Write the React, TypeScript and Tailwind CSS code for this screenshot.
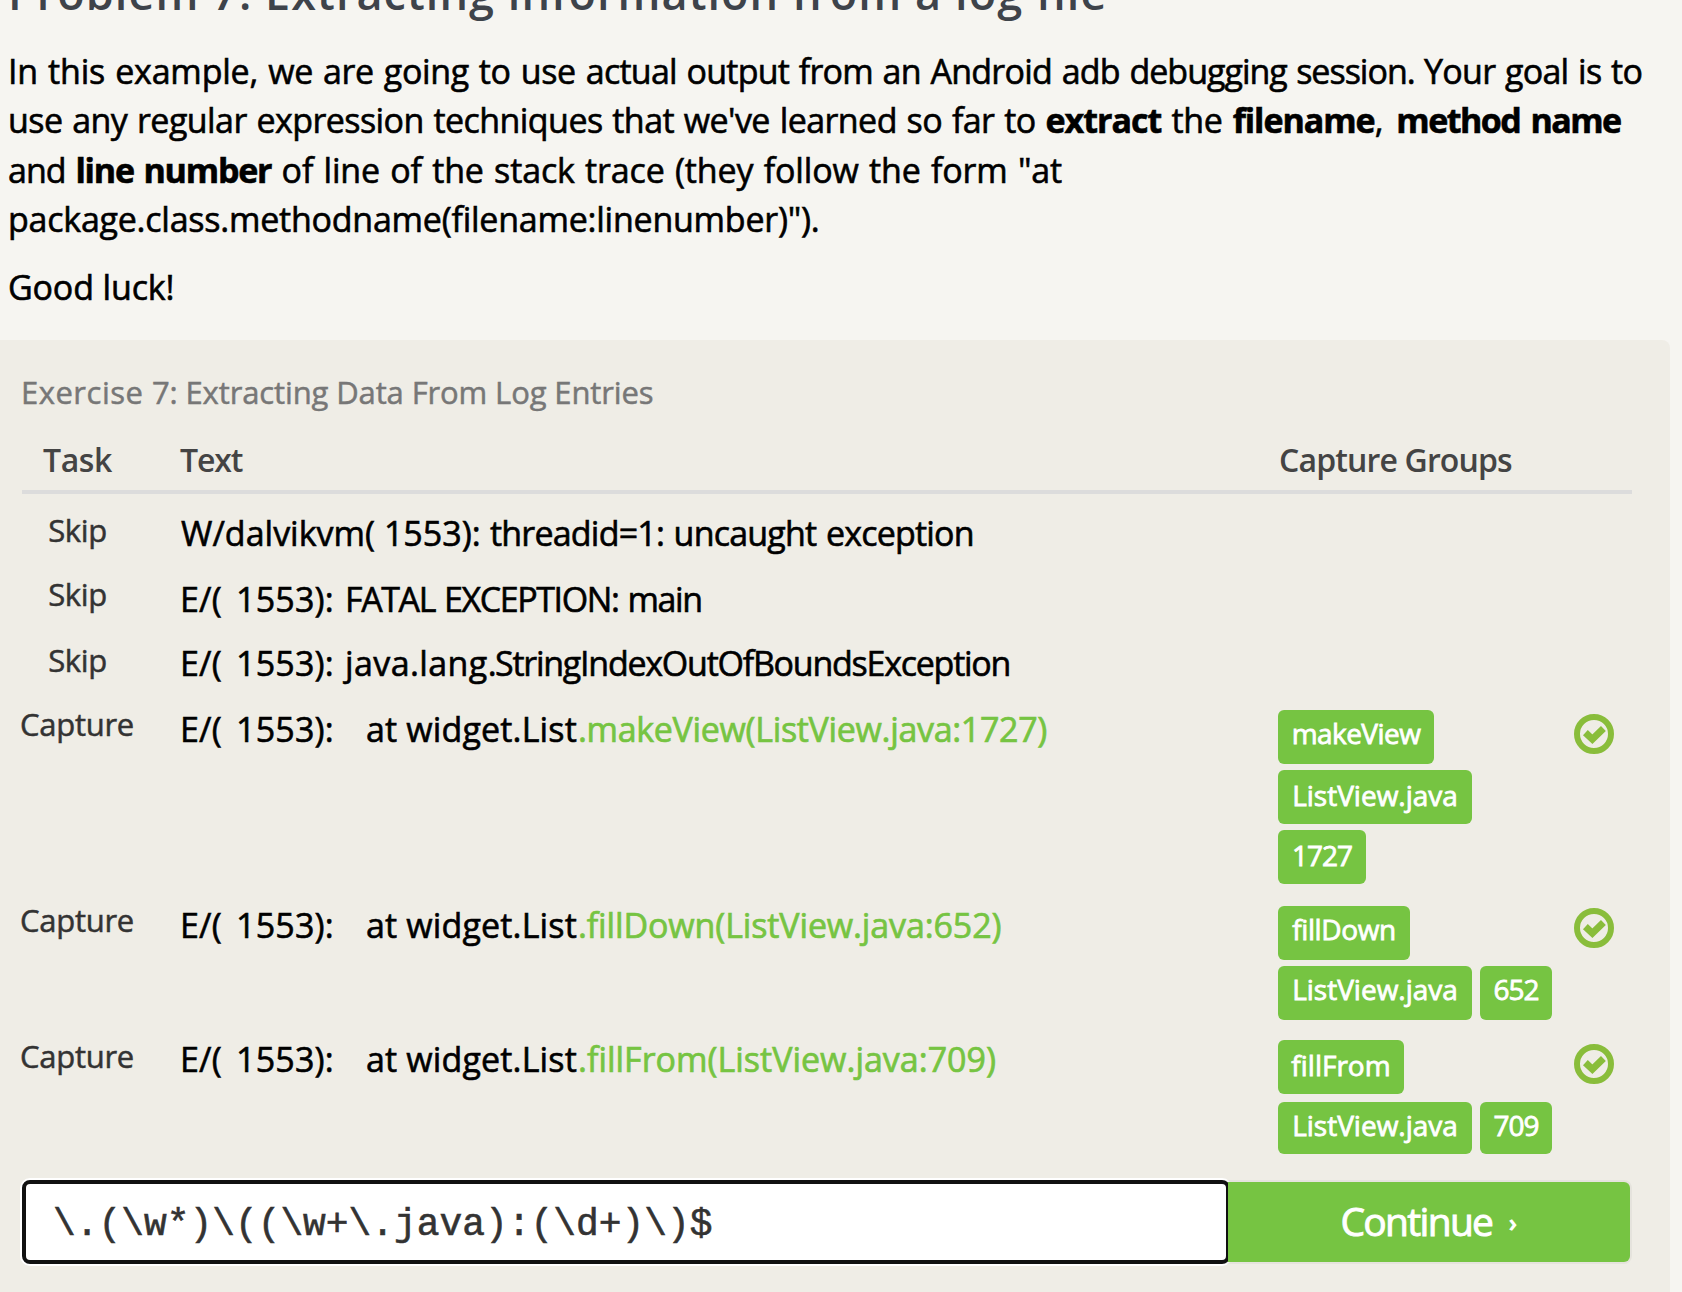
import React from "react";

type Badge = { label: string; className: string };

function CheckMark({ className }: { className: string }) {
  return (
    <svg viewBox="0 0 40 40" className={`size-10 ${className}`} fill="none" stroke="#89bd3b">
      <circle cx="20" cy="20" r="17" strokeWidth="6" />
      <path d="M11.4 18.6 18.4 25.2 29.4 14.6" strokeWidth="7" strokeLinejoin="miter" />
    </svg>
  );
}

function Row({
  task,
  taskClass,
  rowClass,
  children,
  badges,
  checkClass,
}: {
  task: string;
  taskClass: string;
  rowClass: string;
  children: React.ReactNode;
  badges?: Badge[];
  checkClass?: string;
}) {
  return (
    <div className={`grid grid-cols-[158px_1098px_280px_74px] items-start ${rowClass}`}>
      <div
        className={`w-[111px] whitespace-nowrap text-[31px] leading-[44px] text-[#333] [-webkit-text-stroke:0.5px_#333] ${taskClass}`}
      >
        {task}
      </div>
      <div className="flex whitespace-pre pt-[15px] text-[34px] leading-[49px] text-black [-webkit-text-stroke:0.6px_#000]">
        {children}
      </div>
      <div className="flex flex-wrap gap-x-2 gap-y-1.5 pt-5">
        {badges?.map((b) => (
          <span
            key={b.label}
            className={`rounded-md bg-[#76c442] text-center text-[28px] text-white [-webkit-text-stroke:0.8px_#fff] ${b.className}`}
          >
            {b.label}
          </span>
        ))}
      </div>
      {checkClass && <CheckMark className={`justify-self-start ml-4 ${checkClass}`} />}
    </div>
  );
}

function Prefix() {
  return <span className="w-[165px] tracking-[0.2px] [word-spacing:5px]">E/( 1553):</span>;
}

export default function App() {
  return (
    <main className="h-[1292px] w-[1682px] overflow-hidden bg-[#f6f5f1] font-['Open_Sans',sans-serif]">
      <h1 className="-mt-[37px] ml-2 whitespace-nowrap text-[45px] font-semibold leading-[60px] tracking-[1.06px] text-[#3e434a]">
        Problem 7: Extracting information from a log file
      </h1>
      <div className="mt-[24px] ml-2 whitespace-nowrap text-[34px] leading-[49.33px] text-black [-webkit-text-stroke:0.6px_#000]">
        <p>
          <span className="tracking-[-0.2px] [word-spacing:1.5px]">In this example, </span>
          <span className="tracking-[-0.35px] [word-spacing:1.5px]">we are going to use </span>
          <span className="tracking-[-0.75px] [word-spacing:1.5px]">actual output from an Android adb </span>
          <span className="tracking-[-1px] [word-spacing:1.5px]">debugging session. </span>
          <span className="tracking-[-0.72px] [word-spacing:1.5px]">Your goal is to</span>
          <br />
          <span className="tracking-[-0.57px] [word-spacing:1.5px]">
            use any regular expression techniques that we've learned so far to{" "}
          </span>
          <b className="tracking-[-0.96px]">extract</b>
          <span className="tracking-[-0.3px] [word-spacing:1.5px]"> the </span>
          <b className="tracking-[-1.04px]">filename</b>
          <span className="[word-spacing:4px]">, </span>
          <b className="tracking-[-1.55px] [word-spacing:3px]">method name</b>
          <br />
          <span className="tracking-[-1px] [word-spacing:2px]">and </span>
          <b className="tracking-[-1.2px] [word-spacing:2px]">line number</b>
          <span className="tracking-[-0.12px] [word-spacing:1.5px]">
            {" "}of line of the stack trace (they follow the form "at
          </span>
          <br />
          <span className="tracking-[-0.24px]">package.class.methodname(filename:linenumber)").</span>
        </p>
        <p className="mt-[19px] tracking-[-0.15px]">Good luck!</p>
      </div>

      <section className="mt-[27px] h-[960px] w-[1670px] rounded-tr-lg bg-[#efede6] pt-[30px] pl-[22px]">
        <h2 className="-ml-px text-[31px] leading-[44px] text-[#777] [-webkit-text-stroke:0.5px_#777]">
          <span className="tracking-[0.5px]">Exercise </span>
          <span className="tracking-[-0.12px]">7: Extracting Data From Log Entries</span>
        </h2>
        <div className="mt-[22px] grid h-[58px] w-[1610px] grid-cols-[158px_1099px_353px] border-b-4 border-[#dcdcdc] text-[32px] font-semibold leading-[48px] text-[#444]">
          <span className="w-[111px] text-center tracking-[-0.39px]">Task</span>
          <span className="tracking-[-1.1px]">Text</span>
          <span className="tracking-[-0.85px]">Capture Groups</span>
        </div>

        <div className="w-[1610px]">
          <Row task="Skip" taskClass="pt-3.5 text-center tracking-[-0.4px]" rowClass="h-[66px]">
            <span className="w-[310px] pl-px">W/dalvikvm( 1553):</span>
            <span className="tracking-[-0.8px] [word-spacing:1.5px]">threadid=1: uncaught exception</span>
          </Row>
          <Row task="Skip" taskClass="pt-3 text-center tracking-[-0.4px]" rowClass="h-[64px]">
            <Prefix />
            <span className="tracking-[-1.4px] [word-spacing:1.5px]">FATAL EXCEPTION: main</span>
          </Row>
          <Row task="Skip" taskClass="pt-3.5 text-center tracking-[-0.4px]" rowClass="h-[66px]">
            <Prefix />
            <span className="w-[150px] tracking-[0.4px]">java.lang.</span>
            <span className="tracking-[-1.25px]">StringIndexOutOfBoundsException</span>
          </Row>
          <Row
            task="Capture"
            taskClass="pt-3 -ml-0.5 tracking-[-0.27px]"
            rowClass="h-[196px]"
            checkClass="mt-6"
            badges={[
              { label: "makeView", className: "h-[54px] w-[156px] leading-[47px] tracking-[-0.55px]" },
              { label: "ListView.java", className: "h-[54px] w-[194px] leading-[50px]" },
              { label: "1727", className: "h-[54px] w-[88px] leading-[50px] tracking-[-1px]" },
            ]}
          >
            <Prefix />
            <span className="ml-[21px] w-[212px] tracking-[0.15px]">at widget.List</span>
            <span className="tracking-[-0.33px] text-[#76c442] [-webkit-text-stroke:0.7px_#76c442]">
              .makeView(ListView.java:1727)
            </span>
          </Row>
          <Row
            task="Capture"
            taskClass="pt-3 -ml-0.5 tracking-[-0.27px]"
            rowClass="h-[134px]"
            checkClass="mt-[22px]"
            badges={[
              { label: "fillDown", className: "mr-10 h-[54px] w-[132px] leading-[47px] tracking-[-0.4px]" },
              { label: "ListView.java", className: "h-[54px] w-[194px] leading-[47px]" },
              { label: "652", className: "h-[54px] w-[72px] leading-[47px] tracking-[-1px]" },
            ]}
          >
            <Prefix />
            <span className="ml-[21px] w-[212px] tracking-[0.15px]">at widget.List</span>
            <span className="tracking-[-0.13px] text-[#76c442] [-webkit-text-stroke:0.7px_#76c442]">
              .fillDown(ListView.java:652)
            </span>
          </Row>
          <Row
            task="Capture"
            taskClass="pt-3.5 -ml-0.5 tracking-[-0.27px]"
            rowClass="h-[160px]"
            checkClass="mt-6"
            badges={[
              { label: "fillFrom", className: "mr-10 h-[54px] w-[126px] leading-[50px]" },
              { label: "ListView.java", className: "mt-0.5 h-[52px] w-[194px] leading-[47px]" },
              { label: "709", className: "mt-0.5 h-[52px] w-[72px] leading-[47px] tracking-[-1px]" },
            ]}
          >
            <Prefix />
            <span className="ml-[21px] w-[212px] tracking-[0.15px]">at widget.List</span>
            <span className="tracking-[0px] text-[#76c442] [-webkit-text-stroke:0.7px_#76c442]">
              .fillFrom(ListView.java:709)
            </span>
          </Row>
        </div>

        <div className="flex w-[1608px] items-center">
          <input
            readOnly
            value="\.(\w*)\((\w+\.java):(\d+)\)$"
            className="h-[84px] w-[1208px] rounded-lg border-4 border-[#111] bg-white pt-1.5 pl-[27px] font-['Liberation_Mono',monospace] text-[37.9px] text-[#333] shadow-[0_0_0_2px_#fff] outline-none [-webkit-text-stroke:0.6px_#333]"
          />
          <button className="relative -ml-0.5 flex h-20 flex-1 items-center justify-center rounded-r-md bg-[#76c442] text-[39px] text-white shadow-[0_0_0_2px_rgba(0,0,0,0.04)]">
            <span className="tracking-[-1.7px] [-webkit-text-stroke:0.9px_#fff]">Continue</span>
            <span className="ml-4 pt-0.5 text-[25px] font-bold leading-none">›</span>
          </button>
        </div>
      </section>
    </main>
  );
}
